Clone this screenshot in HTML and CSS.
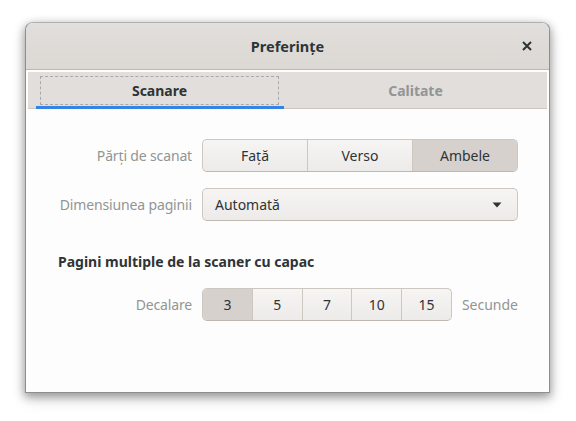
FILE: index.html
```html
<!DOCTYPE html>
<html lang="ro">
<head>
<meta charset="utf-8">
<link rel="stylesheet" href="styles.css">
</head>
<body>
<div class="desktop">
<div class="window">
  <div class="headerbar">
    <div class="title">Preferințe</div>
    <div class="close">
      <svg width="10" height="10" viewBox="0 0 10 10"><path d="M1 1 L9 9 M9 1 L1 9" stroke="#2e3436" stroke-width="2" stroke-linecap="butt"/></svg>
    </div>
  </div>
  <div class="content">
    <div class="tabs">
      <div class="tab active"><div class="focus">Scanare</div></div>
      <div class="tab"><div class="plain">Calitate</div></div>
    </div>
    <div class="page">
      <div class="grid">
        <div class="label">Părți de scanat</div>
        <div class="seg seg3">
          <div class="segbtn">Față</div>
          <div class="segbtn">Verso</div>
          <div class="segbtn on">Ambele</div>
        </div>
        <div class="label">Dimensiunea paginii</div>
        <div class="combo">
          <span>Automată</span>
          <svg width="10" height="6" viewBox="0 0 10 6"><path d="M0.5 0.5 L9.5 0.5 L5 5.5 Z" fill="#2e3436"/></svg>
        </div>
        <div class="heading">Pagini multiple de la scaner cu capac</div>
        <div class="label">Decalare</div>
        <div class="delayrow">
          <div class="seg seg5">
            <div class="segbtn on">3</div>
            <div class="segbtn">5</div>
            <div class="segbtn">7</div>
            <div class="segbtn">10</div>
            <div class="segbtn">15</div>
          </div>
          <div class="unit">Secunde</div>
        </div>
      </div>
    </div>
  </div>
</div>
</div>
</body>
</html>
```
FILE: styles.css
```css
html, body {
  margin: 0;
  padding: 0;
  background: #ffffff;
}
body {
  font-family: "Noto Sans", "DejaVu Sans", sans-serif;
  font-size: 14px;
  color: #2e3436;
}
.desktop {
  height: 421px;
  box-sizing: border-box;
  padding: 22px 0 0 25px;
}
.window {
  width: 523px;
  height: 369px;
  border: 1px solid #8e8e8e;
  border-top-color: #b0b0b0;
  border-radius: 8px 8px 0 0;
  background: #fdfdfd;
  box-shadow: 0 3px 9px 1px rgba(0,0,0,0.32), 0 6px 16px rgba(0,0,0,0.14);
  display: flex;
  flex-direction: column;
  overflow: hidden;
}
.headerbar {
  height: 46px;
  flex: none;
  background: linear-gradient(#e1dedb, #dcd8d4);
  border-bottom: 1px solid #bfb8b1;
  display: flex;
  align-items: center;
  justify-content: center;
  position: relative;
  border-radius: 7px 7px 0 0;
}
.title {
  font-weight: bold;
  font-size: 14.5px;
  color: #2e3436;
}
.close {
  position: absolute;
  right: 17px;
  top: 18px;
  width: 10px;
  height: 10px;
  display: flex;
}
.content {
  flex: 1;
  padding: 2px 2px 0 2px;
  display: flex;
  flex-direction: column;
  background: #fdfdfd;
}
.tabs {
  height: 36px;
  background: #e1dedb;
  border-bottom: 1px solid #cdc7c2;
  display: flex;
  gap: 8px;
  padding: 0 7px 0 8px;
}
.tab {
  flex: 1;
  padding: 4px 5px 4px 4px;
  display: flex;
  font-weight: bold;
  color: #929595;
}
.tab.active {
  color: #2e3436;
  box-shadow: inset 0 -3px #3584e4;
  margin-bottom: -1px;
}
.focus, .plain {
  flex: 1;
  display: flex;
  align-items: center;
  justify-content: center;
}
.focus {
  border: 1px dashed #a9a9a9;
}
.page {
  padding: 30px 30px 0 30px;
}
.grid {
  display: grid;
  grid-template-columns: 134px 316px;
  column-gap: 10px;
  row-gap: 16px;
  align-items: center;
}
.label {
  text-align: right;
  color: #929595;
  white-space: nowrap;
  letter-spacing: -0.15px;
}
.seg {
  display: flex;
  height: 33px;
  box-sizing: border-box;
  border: 1px solid #cdc7c2;
  border-bottom-color: #bfb8b1;
  border-radius: 5px;
  overflow: hidden;
  background: linear-gradient(#f6f5f4, #edebe9);
}
.segbtn {
  flex: 1;
  display: flex;
  align-items: center;
  justify-content: center;
  border-left: 1px solid #cdc7c2;
}
.segbtn:first-child {
  border-left: none;
}
.segbtn.on {
  background: #d6d1cd;
}
.seg5 {
  width: 250px;
}
.combo {
  height: 33px;
  box-sizing: border-box;
  border: 1px solid #cdc7c2;
  border-bottom-color: #bfb8b1;
  border-radius: 5px;
  background: linear-gradient(#f6f5f4, #edebe9);
  display: flex;
  align-items: center;
  justify-content: space-between;
  padding: 0 15px 0 12px;
}
.heading {
  grid-column: 1 / 3;
  font-weight: bold;
  margin-top: 15px;
  line-height: 20px;
}
.delayrow {
  display: flex;
  align-items: center;
  gap: 10px;
}
.unit {
  color: #929595;
}
```
